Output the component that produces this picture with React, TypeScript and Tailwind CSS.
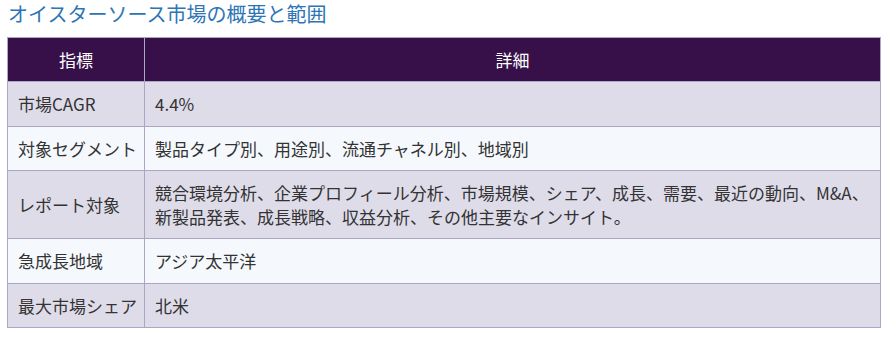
const ROWS = [
  { label: '市場CAGR', value: ['4.4%'] },
  { label: '対象セグメント', value: ['製品タイプ別、用途別、流通チャネル別、地域別'] },
  {
    label: 'レポート対象',
    value: [
      '競合環境分析、企業プロフィール分析、市場規模、シェア、成長、需要、最近の動向、M&A、',
      '新製品発表、成長戦略、収益分析、その他主要なインサイト。',
    ],
  },
  { label: '急成長地域', value: ['アジア太平洋'] },
  { label: '最大市場シェア', value: ['北米'] },
];

export default function App() {
  return (
    <div
      className="min-h-screen bg-white px-[7px] pb-2"
      style={{ fontFamily: '"Noto Sans CJK JP", "Noto Sans", sans-serif' }}
    >
      <h2 className="text-[20px] leading-[28px] text-[#2e75b6] pl-px mb-[9px]">
        オイスターソース市場の概要と範囲
      </h2>
      <table className="w-full table-fixed border-collapse border border-[#aaa6c4] text-[17px] leading-[23.5px] text-[#333]">
        <thead>
          <tr className="bg-[#37104a] text-white">
            <th className="w-[137px] h-[44px] border border-[#aaa6c4] font-normal text-center">指標</th>
            <th className="h-[44px] border border-[#aaa6c4] font-normal text-center">詳細</th>
          </tr>
        </thead>
        <tbody>
          {ROWS.map((row, i) => (
            <tr key={row.label} className={i % 2 === 0 ? 'bg-[#dfdcea]' : 'bg-[#f5f9fd]'}>
              <td className="border border-[#aaa6c4] pl-[10px] pr-0 py-[10px] whitespace-nowrap">{row.label}</td>
              <td className="border border-[#aaa6c4] px-[10px] py-[10px]">
                {row.value.map(line => (
                  <div key={line} className="whitespace-nowrap">{line}</div>
                ))}
              </td>
            </tr>
          ))}
        </tbody>
      </table>
    </div>
  );
}
